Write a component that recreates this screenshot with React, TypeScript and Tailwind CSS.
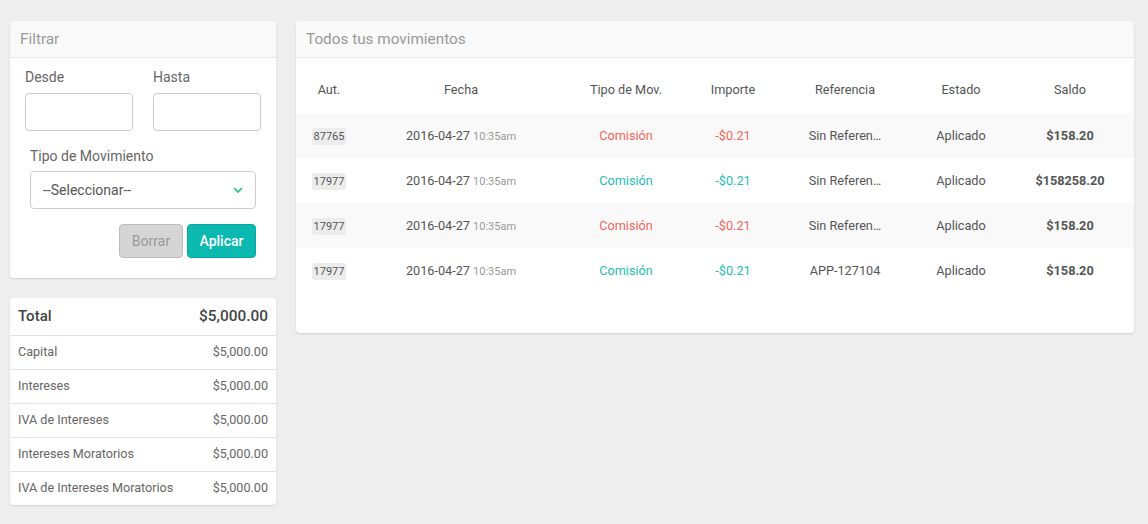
import React from "react";

const rows = [
  { aut: "87765", tipo: "red", ref: "Sin Referen…", saldo: "$158.20" },
  { aut: "17977", tipo: "teal", ref: "Sin Referen…", saldo: "$158258.20" },
  { aut: "17977", tipo: "red", ref: "Sin Referen…", saldo: "$158.20" },
  { aut: "17977", tipo: "teal", ref: "APP-127104", saldo: "$158.20" },
];

const summary = [
  "Capital",
  "Intereses",
  "IVA de Intereses",
  "Intereses Moratorios",
  "IVA de Intereses Moratorios",
];

export default function App() {
  return (
    <div
      className="min-h-[524px] w-[1148px] bg-[#eeeeee] pt-[21px] pl-[10px] pr-[14px] flex gap-[20px] items-start text-[#555]"
      style={{ fontFamily: "Roboto, 'Liberation Sans', sans-serif" }}
    >
      {/* Left column */}
      <div className="w-[266px] flex flex-col gap-[20px]">
        {/* Filter card */}
        <div className="bg-white rounded-[4px] shadow-[0_1px_2px_rgba(0,0,0,0.12)] overflow-hidden">
          <div className="h-[37px] bg-[#f9f9f9] border-b border-[#e8e8e8] px-[10px] flex items-center text-[15.3px] text-[#999]">
            Filtrar
          </div>
          <div className="px-[15px] pt-[9px] pb-[20px]">
            <div className="grid grid-cols-2 gap-[20px]">
              <div>
                <div className="h-[20px] leading-[20px] text-[14px] text-[#666] mb-[6px]">Desde</div>
                <div className="h-[38px] border border-[#ccc] rounded-[4px] bg-white" />
              </div>
              <div>
                <div className="h-[20px] leading-[20px] text-[14px] text-[#666] mb-[6px]">Hasta</div>
                <div className="h-[38px] border border-[#ccc] rounded-[4px] bg-white" />
              </div>
            </div>
            <div className="px-[5px] mt-[15px]">
              <div className="h-[20px] leading-[20px] text-[14px] text-[#666] mb-[5px]">Tipo de Movimiento</div>
              <div className="h-[38px] border border-[#ccc] rounded-[4px] bg-white flex items-center justify-between pl-[12px] pr-[12px] text-[14px] text-[#555]">
                <span>--Seleccionar--</span>
                <svg width="10" height="7" viewBox="0 0 10 7" fill="none">
                  <path d="M1.5 1.5 L5 5 L8.5 1.5" stroke="#1bbf8f" strokeWidth="1.6" strokeLinecap="round" />
                </svg>
              </div>
              <div className="mt-[15px] flex justify-end gap-[4px]">
                <button className="h-[34px] w-[64px] rounded-[4px] bg-[#d5d5d5] border border-[#bcbcbc] text-[14px] text-[#999]">
                  Borrar
                </button>
                <button className="h-[34px] w-[69px] rounded-[4px] bg-[#0bb9b1] border border-[#0aa69f] text-[14px] text-white font-medium">
                  Aplicar
                </button>
              </div>
            </div>
          </div>
        </div>

        {/* Summary card */}
        <div className="bg-white rounded-[4px] shadow-[0_1px_2px_rgba(0,0,0,0.12)] overflow-hidden">
          <div className="h-[37px] px-[8px] flex items-center justify-between text-[#444]">
            <span className="text-[15px] font-medium">Total</span>
            <span className="text-[15.4px] font-medium">$5,000.00</span>
          </div>
          {summary.map((s) => (
            <div
              key={s}
              className="h-[34px] px-[8px] border-t border-[#e2e2e2] flex items-center justify-between text-[12.6px] text-[#666]"
            >
              <span>{s}</span>
              <span>$5,000.00</span>
            </div>
          ))}
        </div>
      </div>

      {/* Right card */}
      <div className="w-[838px] bg-white rounded-[4px] shadow-[0_1px_2px_rgba(0,0,0,0.12)] overflow-hidden">
        <div className="h-[37px] bg-[#f9f9f9] border-b border-[#e8e8e8] px-[10px] flex items-center text-[15.3px] text-[#999]">
          Todos tus movimientos
        </div>
        <div className="pt-[9px] pb-[40px]">
          <table className="w-full table-fixed border-collapse text-[12.7px]">
            <colgroup>
              <col className="w-[66px]" />
              <col className="w-[198px]" />
              <col className="w-[132px]" />
              <col className="w-[82px]" />
              <col className="w-[142px]" />
              <col className="w-[90px]" />
              <col className="w-[128px]" />
            </colgroup>
            <thead>
              <tr className="h-[46px] text-[#555]">
                <th className="font-normal text-center">Aut.</th>
                <th className="font-normal text-center">Fecha</th>
                <th className="font-normal text-center">Tipo de Mov.</th>
                <th className="font-normal text-center">Importe</th>
                <th className="font-normal text-center">Referencia</th>
                <th className="font-normal text-center">Estado</th>
                <th className="font-normal text-center">Saldo</th>
              </tr>
            </thead>
            <tbody>
              {rows.map((r, i) => {
                const color = r.tipo === "red" ? "text-[#f7645c]" : "text-[#1ebdb6]";
                return (
                  <tr key={i} className={`h-[45px] ${i % 2 === 0 ? "bg-[#f9f9f9]" : "bg-white"}`}>
                    <td className="text-center">
                      <span className="inline-block bg-[#ececec] rounded-[3px] px-[2px] leading-[17px] text-[11px] text-[#555]">
                        {r.aut}
                      </span>
                    </td>
                    <td className="text-center text-[#555]">
                      2016-04-27 <span className="text-[11px] text-[#999]">10:35am</span>
                    </td>
                    <td className={`text-center ${color}`}>Comisión</td>
                    <td className={`text-center ${color}`}>-$0.21</td>
                    <td className="text-center text-[#555]">{r.ref}</td>
                    <td className="text-center text-[#555]">Aplicado</td>
                    <td className="text-center text-[#555] font-bold">{r.saldo}</td>
                  </tr>
                );
              })}
            </tbody>
          </table>
        </div>
      </div>
    </div>
  );
}
